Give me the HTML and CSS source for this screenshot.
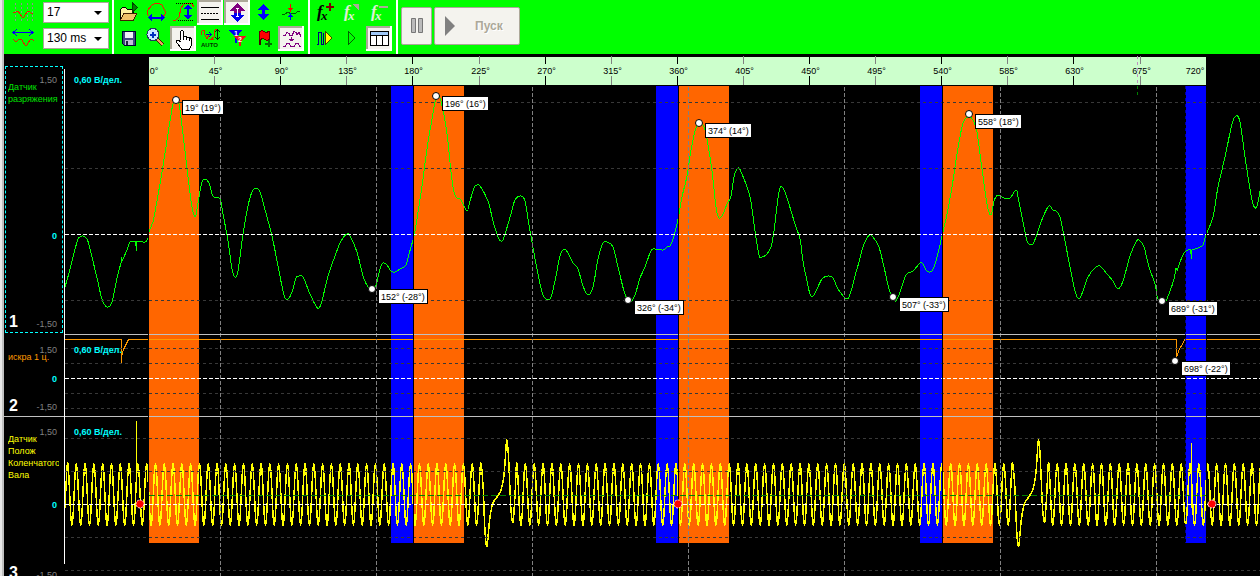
FILE: index.html
```html
<!DOCTYPE html>
<html lang="ru">
<head>
<meta charset="utf-8">
<title>Осциллограф</title>
<link rel="stylesheet" href="styles.css">
</head>
<body>
<div class="app">
  <header class="toolbar">
    <div class="group scale-group">
      <label class="scale-row">
        <svg class="icon" viewBox="0 0 26 25"><path d="M5.500 3v19M11.500 3v19M17.500 3v19M22.500 3v19" stroke="#909090" stroke-dasharray="2 2"/><path d="M3 12h3l2-1 2 3 2 3h2l3-5 2-1 2 2 2 1" stroke="#e02000"/></svg>
        <span class="select-box"><select aria-label="Масштаб"><option>17</option></select></span>
      </label>
      <label class="scale-row">
        <svg class="icon" viewBox="0 0 26 25"><path d="M3 6.500h20M7 3L3 6.500 7 10M19 3l4 3.500-4 3.500" stroke="#0000f0"/><path d="M3 13l3 3 3-3 3 1 3 5h2l3-5 2-1 2 2" stroke="#e02000"/></svg>
        <span class="select-box"><select aria-label="Развёртка"><option>130 ms</option></select></span>
      </label>
    </div>
    <div class="group tools tools-main">
      <button class="tool" aria-label="Открыть"><svg class="icon" viewBox="0 0 26 25"><path d="M4.500 20.500v-11l2-2h3l2 2h6v4" fill="#fff0a0" stroke="#000"/><path d="M4.500 20.500l3-7h13l-3 7z" fill="#f0c068" stroke="#402000"/><path d="M16.500 3v9l5-4.500z" fill="#008000" stroke="#004000"/></svg></button>
      <button class="tool" aria-label="Период"><svg class="icon" viewBox="0 0 26 25"><path d="M7 17l-3-3v-3l5-6 4-2h2l4 2 3 6v3l-2 3" stroke="#f02000"/><path d="M8 17.500h12" stroke="#0000f0" stroke-width="2"/><path d="M5 17.500l4-4v8zM22 17.500l-4-4v8z" fill="#0000f0"/></svg></button>
      <button class="tool" aria-label="Амплитуда"><svg class="icon" viewBox="0 0 26 25"><path d="M3 20h3l3-3 2-9 3-4 4-1 4 1 2 3" stroke="#f02000"/><path d="M6 3.500h17M8 20.500h15" stroke="#000" stroke-dasharray="1 1"/><path d="M18 7v10" stroke="#0000f0" stroke-width="2"/><path d="M18 4l-4 5h8zM18 20l-4-5h8z" fill="#0000f0"/></svg></button>
      <button class="tool pressed" aria-label="Линии сетки"><svg class="icon" viewBox="0 0 26 25"><path d="M4 7.500h18M4 19.500h18" stroke="#000"/><path d="M4 13.500h18" stroke="#000" stroke-dasharray="2 1"/></svg></button>
      <button class="tool pressed" aria-label="Автомасштаб"><svg class="icon" viewBox="0 0 26 25"><path d="M13.500 3l7.500 8h-4v2h-7v-2H6z" fill="#800080"/><path d="M13.500 22L6 14.500h4V13h7v1.500h4z" fill="#0000f0"/><path d="M13.500 8v9M12 8.500h3M12 16.500h3" stroke="#fff"/></svg></button>
      <button class="tool" aria-label="По вертикали"><svg class="icon" viewBox="0 0 26 25"><path d="M12.500 4L7 10h4v4H7l5.500 6 5.500-6h-4v-4h4z" fill="#0000ff"/></svg></button>
      <button class="tool" aria-label="Синхронизация"><svg class="icon" viewBox="0 0 26 25"><path d="M4 14h3l3-2 3 2 3-1h2l2-2h2" stroke="#006000"/><path d="M12.500 4v7" stroke="#f00" stroke-width="1"/><path d="M10 8h5l-2.500 4z" fill="#f00"/><path d="M12.500 14v6" stroke="#00f"/><path d="M10 17h5l-2.500-4z" fill="#00f"/></svg></button>
      <button class="tool" aria-label="Сохранить"><svg class="icon" viewBox="0 0 26 25"><path d="M6.500 5.500h13v14h-11l-2-2z" fill="#404880" stroke="#000030"/><path d="M9 6h8v6H9z" fill="#f0f0f8"/><path d="M9 14h8v5H9z" fill="#c0c0d8"/><path d="M10 15h2v4h-2z" fill="#202040"/></svg></button>
      <button class="tool" aria-label="Лупа"><svg class="icon" viewBox="0 0 26 25"><path d="M14 13l6 6" stroke="#402000" stroke-width="4"/><path d="M14 13l6 6" stroke="#f0a060" stroke-width="2"/><circle cx="10" cy="8.500" r="6" fill="#c8e8ff" stroke="#203860"/><path d="M7 8.500h6M10 5.500v6" stroke="#0030c0" stroke-width="2"/></svg></button>
      <button class="tool pressed" aria-label="Рука"><svg class="icon" viewBox="0 0 26 25"><path d="M10.500 14V5.500l1-1h1l1 1V11l1-1h2v2l1-1h2v2l1-1 1 1v6l-2 4h-8l-5-7v-2h2l2 2M13.500 11v3M16.500 12v2M19.500 13v2" fill="#fff" stroke="#000"/></svg></button>
      <button class="tool" aria-label="Авто"><svg class="icon" viewBox="0 0 26 25"><path d="M4 9l1-4 2-1 1 5 2 4 2-5M17 13h-3l3-2 1-7 3-1" stroke="#e02000"/><path d="M9 8.500h5M12 6l2 2.500-2 2.500" stroke="#0000c0"/><path d="M20.500 4v9M18 6l2.500-2.500L23 6M18 11l2.500 2.500L23 11" stroke="#003000"/><text x="4" y="21" class="auto-text">AUTO</text></svg></button>
      <button class="tool" aria-label="Маркеры"><svg class="icon" viewBox="0 0 26 25"><path d="M5 4h13l-5 7v6h-2v-6z" fill="#0000f0"/><path d="M10 10h12l-5 6v4h-2v-4z" fill="#f01020"/><text x="10" y="10" class="flag-text">1</text><text x="14" y="16" class="flag-text">2</text></svg></button>
      <button class="tool" aria-label="Добавить метку"><svg class="icon" viewBox="0 0 26 25"><path d="M8.500 5v14" stroke="#400000" stroke-width="2"/><path d="M8.500 5.500l3-1 3 2 4-1v8l-3 1-3-2-4 1z" fill="#f00" stroke="#600000"/><path d="M14 17.500h7M17.500 14v7" stroke="#007000" stroke-width="2"/></svg></button>
      <button class="tool pressed" aria-label="Сглаживание"><svg class="icon" viewBox="0 0 26 25"><path d="M5 9.500h2l2-3 2 1 1 2h2l2-4 2 1 1 2 2-2 1 2v2M5 20.500h2l2-3h2l2 3h3l2-3h2l2 3h1" stroke="#800080"/><path d="M13.500 11v4M11 13.500h5M12 14.500h3" stroke="#800080"/></svg></button>
    </div>
    <div class="group tools tools-math">
      <button class="tool" aria-label="Добавить функцию"><svg class="icon" viewBox="0 0 26 25"><text x="5" y="17" class="fx">f</text><text x="9" y="20" class="fx fx-x">x</text><path d="M14 7h8M18 3v8" stroke="#800000" stroke-width="2"/></svg></button>
      <button class="tool" aria-label="Изменить функцию" disabled><svg class="icon off" viewBox="0 0 26 25"><text x="5" y="17" class="fx">f</text><text x="9" y="20" class="fx fx-x">x</text><path d="M13 4h7v7z" fill="#aca899"/></svg></button>
      <button class="tool" aria-label="Удалить функцию" disabled><svg class="icon off" viewBox="0 0 26 25"><text x="5" y="17" class="fx">f</text><text x="9" y="20" class="fx fx-x">x</text><path d="M13 7h9" stroke="#aca899" stroke-width="2"/></svg></button>
      <button class="tool" aria-label="Кадр"><svg class="icon" viewBox="0 0 26 25"><path d="M5 18.500h1.500v-12h3v12H11v-12" stroke="#000080"/><path d="M13.500 5.500v13l6.500-6.500z" fill="#ff0" stroke="#404000"/></svg></button>
      <button class="tool" aria-label="Далее"><svg class="icon" viewBox="0 0 26 25"><path d="M9.500 5.500v13l6.500-6.500z" stroke="#006000"/></svg></button>
      <button class="tool pressed" aria-label="Таблица"><svg class="icon" viewBox="0 0 26 25"><path d="M4.500 5.500h18v14h-18z" fill="#fff" stroke="#000"/><path d="M5 6h17v3H5z" fill="#a0c8f8"/><path d="M4.500 9.500h18M10.500 9v10M16.500 9v10" stroke="#000"/></svg></button>
    </div>
    <div class="run-buttons">
      <button class="run" aria-label="Пауза" disabled><svg class="pause-icon" viewBox="0 0 14 18"><path d="M1.500 1.500h4v14h-4zM8.500 1.500h4v14h-4z" fill="#bbb" stroke="#777"/></svg></button>
      <button class="run run-start" disabled><svg class="play-icon" viewBox="0 0 12 20"><path d="M1 0v20L11 10z" fill="#808080"/></svg><span>Пуск</span></button>
    </div>
  </header>
  <main class="scope">
    <aside class="channels">
      <section class="channel selected">
        <p class="name">Датчик разряжения</p>
        <div class="levels"><span>1,50</span><span class="zero">0</span><span>-1,50</span></div>
        <b class="number">1</b>
      </section>
      <section class="channel spark">
        <p class="name">искра 1 ц.</p>
        <div class="levels"><span>1,50</span><span class="zero">0</span><span>-1,50</span></div>
        <b class="number">2</b>
      </section>
      <section class="channel crank">
        <p class="name">Датчик Полож Коленчатого Вала</p>
        <div class="levels"><span>1,50</span><span class="zero">0</span><span>-1,50</span></div>
        <b class="number">3</b>
      </section>
    </aside>
    <svg class="plot"><g id="canvas" transform="translate(-64 -54)"></g></svg>
  </main>
</div>
<script src="plot.js"></script>
</body>
</html>
```
FILE: styles.css
```css
* { box-sizing: border-box; }
body {
  margin: 0;
  background: #e8e8e8;
  font: 9px/12px "Liberation Sans", Arial, sans-serif;
}
.app {
  display: flex;
  flex-direction: column;
  min-height: 100vh;
  margin-left: 2px;
  border-left: 2px solid #c0c0c0;
  background: #000;
  overflow: hidden;
}
.toolbar {
  display: flex;
  height: 54px;
  background: #00ff00;
}
.group { border-right: 2px solid #fff; }
.scale-group {
  display: flex;
  flex-direction: column;
  gap: 5px;
  width: 110px;
  padding: 2px 3px 0 6px;
}
.scale-row {
  display: flex;
  align-items: center;
  justify-content: space-between;
  height: 21px;
}
.icon {
  display: block;
  width: 26px;
  height: 25px;
  fill: none;
  shape-rendering: crispEdges;
}
.select-box {
  display: block;
  position: relative;
  width: 66px;
}
.select-box::after {
  content: "";
  position: absolute;
  right: 7px;
  top: 9px;
  border: 4px solid transparent;
  border-top-color: #000;
  border-bottom: 0;
  pointer-events: none;
}
select {
  display: block;
  appearance: none;
  width: 100%;
  height: 21px;
  padding: 0 3px;
  border: 1px solid #aca899;
  border-radius: 0;
  background: #fff;
  color: #000;
  font: 12px/19px "Liberation Sans", Arial, sans-serif;
}
.tools {
  display: grid;
  grid-auto-rows: 25px;
  gap: 1px;
  padding: 0 2px;
}
.tools-main { grid-template-columns: repeat(7, 26px); width: 196px; }
.tools-math { grid-template-columns: repeat(3, 26px); width: 88px; }
.tool {
  padding: 0;
  border: 0;
  background: none;
}
.pressed {
  background: #f4f3ee;
  box-shadow: inset -2px -2px #fff, inset 2px 2px #aca899;
}
.auto-text { font: bold 6px "Liberation Sans", sans-serif; fill: #003000; }
.flag-text { font: bold 7px "Liberation Sans", sans-serif; fill: #fff; }
.fx { font: italic bold 17px "Liberation Serif", serif; fill: #000; }
.fx-x { font-size: 13px; }
.off .fx { fill: #e0f0d8; }
.run-buttons {
  display: flex;
  gap: 2px;
  padding: 7px 3px;
}
.run {
  display: flex;
  align-items: center;
  justify-content: center;
  width: 31px;
  height: 38px;
  padding: 0;
  border: 1px solid #aca899;
  border-radius: 2px;
  background: #f4f3ee;
  color: #aca899;
  font: bold 12px/16px "Liberation Sans", Arial, sans-serif;
  text-shadow: 1px 1px #fff;
}
.run-start {
  justify-content: flex-start;
  gap: 19px;
  width: 86px;
  padding-left: 9px;
}
.pause-icon { width: 14px; height: 18px; }
.play-icon { width: 12px; height: 20px; }

.scope {
  display: flex;
  flex: 1;
}
.channels {
  display: grid;
  grid-template-rows: 281px 82px 159px;
  width: 60px;
  flex: none;
}
.channel {
  display: grid;
  grid-template-columns: 100%;
  grid-template-rows: 100%;
  padding: 6px 1px 0 4px;
  border-bottom: 1px solid #c0c0c0;
  overflow: hidden;
}
.channel > * { grid-area: 1 / 1; }
.name {
  margin: 10px 0 0;
  color: #00e000;
  overflow: hidden;
}
.selected {
  margin: 12px 1px 1px;
  padding: 0;
  border: 1px dashed #00ffff;
  height: 267px;
}
.selected .name { margin: 14px 0 0 2px; }
.levels {
  display: flex;
  flex-direction: column;
  justify-content: space-between;
  align-items: flex-end;
  padding: 7px 5px 2px 0;
  color: #808080;
}
.zero { color: #00ffff; font-weight: bold; }
.selected .zero { margin: auto 0 76px; }
.number {
  align-self: end;
  padding-left: 3px;
  color: #fff;
  font-size: 16px;
  line-height: 20px;
}
.spark .name { color: #ff9900; }
.spark .levels { padding: 3px 6px 3px 0; }
.spark .number { padding-left: 1px; }
.crank { border: 0; }
.crank .name { color: #ffff00; width: 51px; }
.crank .levels { padding: 3px 6px 0 0; margin-bottom: -5px; }
.crank .zero { margin-top: 3px; }
.crank .number { padding-left: 1px; margin-bottom: -7px; }

.plot {
  flex: 1;
  min-width: 0;
  height: 522px;
  font: 9px "Liberation Sans", Arial, sans-serif;
  shape-rendering: crispEdges;
}
.ruler { fill: #ccffcc; }
.angle { fill: #000; text-anchor: middle; }
.major { stroke: #000; }
.minor { stroke: #808080; }
.intake { fill: #ff6600; }
.overlap { fill: #0000ff; }
.grid { stroke: #383838; stroke-dasharray: 3 3; }
.time { stroke: #808080; stroke-dasharray: 4 2; }
.axis { stroke: #fff; stroke-dasharray: 4 2; }
.mean { stroke: #008000; stroke-dasharray: 6 3; }
.edge { stroke: #fff; }
.split { stroke: #c0c0c0; }
.cut { stroke: #000; }
.dead-point { stroke: #0000a0; stroke-dasharray: 3 3; }
.trace { fill: none; }
.vacuum { stroke: #00ff00; }
.ignition { stroke: #ff9900; }
.teeth { stroke: #ffff00; stroke-width: 1.500; }
.spike { stroke: #ffff00; }
.cursor { stroke: #008000; stroke-dasharray: 3 3; }
.cursor-top { stroke: #c090c0; stroke-dasharray: 3 3; }
.gain { fill: #00ffff; font-weight: bold; }
.dot { fill: #fff; stroke: #000; shape-rendering: geometricPrecision; }
.note { fill: #fff; stroke: #000; }
.note-text { fill: #000; }
.sync { fill: #ff0000; stroke: #fff; stroke-dasharray: 2 1; shape-rendering: geometricPrecision; }
```
FILE: plot.js
```js
const NS = "http://www.w3.org/2000/svg";
const canvas = document.getElementById("canvas");

function add(tag, cls, attrs, text) {
  const el = document.createElementNS(NS, tag);
  el.setAttribute("class", cls);
  for (const key in attrs) el.setAttribute(key, attrs[key]);
  if (text) el.textContent = text;
  canvas.appendChild(el);
}
const line = (cls, x1, y1, x2, y2) => add("line", cls, { x1, y1, x2, y2 });
const rect = (cls, x, y, width, height) => add("rect", cls, { x, y, width, height });

// Smooth curve through a flat list of x, y pairs.
function smooth(v) {
  const p = [];
  for (let i = 0; i < v.length; i += 2) p.push([v[i], v[i + 1]]);
  let d = "M" + p[0];
  for (let i = 0; i < p.length - 1; i++) {
    const a = p[i - 1] || p[i], b = p[i], c = p[i + 1], e = p[i + 2] || c;
    const c1 = [b[0] + (c[0] - a[0]) / 6, b[1] + (c[1] - a[1]) / 6];
    const c2 = [c[0] - (e[0] - b[0]) / 6, c[1] - (e[1] - b[1]) / 6];
    d += "C" + c1 + " " + c2 + " " + c;
  }
  return d;
}

// Angle ruler
rect("ruler", 149, 57, 1057, 28);
for (let i = 0; i <= 16; i++) {
  const x = Math.round(148 + i * 66.100) + 0.5;
  if (i > 0 && i < 16) {
    const cls = i % 2 ? "minor" : "major";
    line(cls, x, 56, x, 64);
    line(cls, x, 76, x, 85);
  }
  add("text", "angle", { x: i === 0 ? 154 : i === 16 ? 1195 : x + 1, y: 74 }, i * 45 + "°");
}

for (const x of [149, 414, 679, 943]) rect("intake", x, 86, 50, 457);
for (const [x, w] of [[391, 22], [656, 22], [920, 22], [1186, 20]]) rect("overlap", x, 86, w, 457);

const vacuum = [
  [65,287, 69,273, 77,242, 80,237, 83,236, 87,239, 90,249, 97,278, 102,299, 107,307, 112,302, 117,278, 121,263],
  [122,261, 127,250, 130,242, 135,241],
  [137,241, 145,242, 148,238, 149,232, 152,224, 154,217, 162,172, 170,121, 173,104, 176,101, 179,104, 183,134, 188,177,
   192,207, 195,217, 197,209, 199,197, 202,182, 205,179, 209,183, 213,196, 220,199, 223,214, 228,241, 232,269,
   235,277, 238,271, 243,234, 248,206, 252,192, 256,188, 260,192, 264,206, 272,236, 278,266, 284,295, 288,299,
   292,292, 296,278, 299,276, 303,277, 310,294, 316,306, 319,308, 322,301, 328,276, 335,256, 341,241, 347,234,
   350,236, 357,252, 363,276, 368,287, 372,289, 376,285, 380,269, 383,263, 387,265, 391,271, 395,272, 400,269,
   406,265, 409,254, 414,236, 417,219, 422,186, 427,149, 432,119, 435,102, 438,97, 441,101, 447,134, 451,172,
   454,192, 457,198, 461,200, 467,211, 470,201, 474,188, 477,185, 480,186, 488,201, 493,221, 498,237, 502,241,
   505,234, 511,214, 515,200, 521,196, 525,201, 528,219, 532,242, 537,269, 542,292, 546,299, 551,297, 556,276,
   560,256, 564,249, 568,253, 573,263, 578,269, 583,286, 588,295, 593,287, 598,259, 603,243, 607,242, 613,247,
   618,267, 624,291, 628,300, 632,301, 636,292, 640,278, 645,267, 650,253, 653,249, 663,250, 667,247, 670,246,
   674,236, 678,219, 682,197, 687,176, 690,156, 695,131, 699,123, 704,127, 707,139, 712,171, 716,207, 719,218,
   723,214, 727,204, 731,196, 734,177, 738,168, 742,174, 750,197, 755,231, 759,255, 762,257, 767,254, 771,247,
   774,231, 779,192, 783,188, 788,201, 795,224, 800,239, 803,261, 807,281, 810,294, 813,296, 817,289, 822,279,
   828,276, 833,278, 838,289, 847,299, 851,291, 855,276, 859,262, 864,244, 870,235, 875,240, 879,247, 884,267,
   889,289, 893,298, 896,301, 900,292, 906,275, 913,271, 920,263, 923,264, 927,271, 932,271, 936,261, 942,236,
   947,214, 952,187, 957,154, 962,127, 965,119, 969,117, 973,120, 977,132, 982,169, 987,204, 991,215, 994,201,
   998,195, 1004,198, 1010,198, 1016,190, 1018,197, 1022,217, 1027,241, 1030,244, 1034,242, 1043,217, 1049,206,
   1053,210, 1056,211, 1060,217, 1065,241, 1070,267, 1075,291, 1079,299, 1083,291, 1088,277, 1095,268, 1100,266,
   1107,274, 1113,281, 1118,289, 1123,281, 1130,256, 1136,242, 1139,240, 1144,247, 1149,267, 1155,284, 1158,299,
   1165,302, 1170,291, 1174,279, 1176,268],
  [1177,271, 1182,257, 1186,251, 1191,249],
  [1192,250, 1198,248, 1203,245, 1206,235, 1213,217, 1218,187, 1225,157, 1232,124, 1236,116, 1240,122, 1245,157,
   1250,189, 1253,204, 1256,208, 1258,202, 1260,191]
];
for (const part of vacuum) add("path", "trace vacuum", { d: smooth(part) });
add("path", "trace vacuum", { d: "M121.500 263v-6l1 4M135.500 241l1 10v-10M1176.500 268l1 3M1190.500 249l1 10v-9" });

add("path", "trace ignition", { d: "M65 339.500H121.500V363.500V357L123.500 349.500L128.500 339.500H1176.500V357L1179 350L1185 339.500H4000" });

// Crankshaft wheel: regular teeth with a missing-tooth gap between runs
const gap = [2.300,490, 3.300,517, 4.700,541, 6,546, 7,537, 9,517, 12,503, 16,497, 20,490, 23,475, 24.500,455, 25.700,440,
  27.300,453, 28.700,483, 30,510, 32,522, 34,495];
const runs = [[67.500, 481, 47], [516.500, 1012.700, 56], [1048.300, 1269.800, 25]];
const wave = [];
for (let y = 0; y < 2; y++) wave.push(65 + y, 508 - y * 22);
runs.forEach(([from, to, count], r) => {
  const period = (to - from) / count;
  for (let k = 0; k <= count * 8; k++) {
    wave.push(from + k * period / 8, 494.500 - 31 * Math.cos(k * Math.PI / 4));
  }
  if (r < 2) for (let i = 0; i < gap.length; i += 2) wave.push(to + gap[i], gap[i + 1]);
});
add("path", "trace teeth", { d: smooth(wave) });
add("path", "trace spike", { d: "M136.500 421V488M1191.500 443V508" });

// Grid
for (const y of [102.500, 168.500, 300.500, 348.500, 363.500, 393.500, 408.500, 438.500, 471.500, 537.500, 570.500]) line("grid", 65, y, 4000, y);
for (let x = 220.500; x < 1200; x += 156) line("time", x, 87, x, 576);
for (const y of [234.500, 378.500, 504.500]) line("axis", 65, y, 4000, y);
line("mean", 149, 495.500, 1206, 495.500);
for (const y of [334.500, 416.500]) line("split", 64, y, 4000, y);
for (const x of [148.500, 413.500, 678.500, 942.500, 1206.500]) line("cut", x, 86, x, 543);
line("dead-point", 1185.500, 86, 1185.500, 543);
line("cursor-top", 1137.500, 56, 1137.500, 85);
line("cursor", 1137.500, 86, 1137.500, 95);
line("edge", 64.500, 69, 64.500, 564);

for (const y of [83, 353, 435]) add("text", "gain", { x: 74, y }, "0,60 В/дел.");
for (const x of [140, 678, 1212]) add("circle", "sync", { cx: x, cy: 504, r: 4 });

const notes = [
  [176, 100, "19° (19°)", 41], [436, 96, "196° (16°)", 46], [699, 123, "374° (14°)", 46], [969, 114, "558° (18°)", 46],
  [372, 289, "152° (-28°)", 49], [628, 300, "326° (-34°)", 49], [893, 297, "507° (-33°)", 49],
  [1162, 301, "689° (-31°)", 49], [1175, 361, "698° (-22°)", 49]
];
for (const [x, y, text, width] of notes) {
  add("circle", "dot", { cx: x, cy: y, r: 3.500 });
  rect("note", x + 6.500, y + 0.500, width, 14);
  add("text", "note-text", { x: x + 9, y: y + 11 }, text);
}
```
